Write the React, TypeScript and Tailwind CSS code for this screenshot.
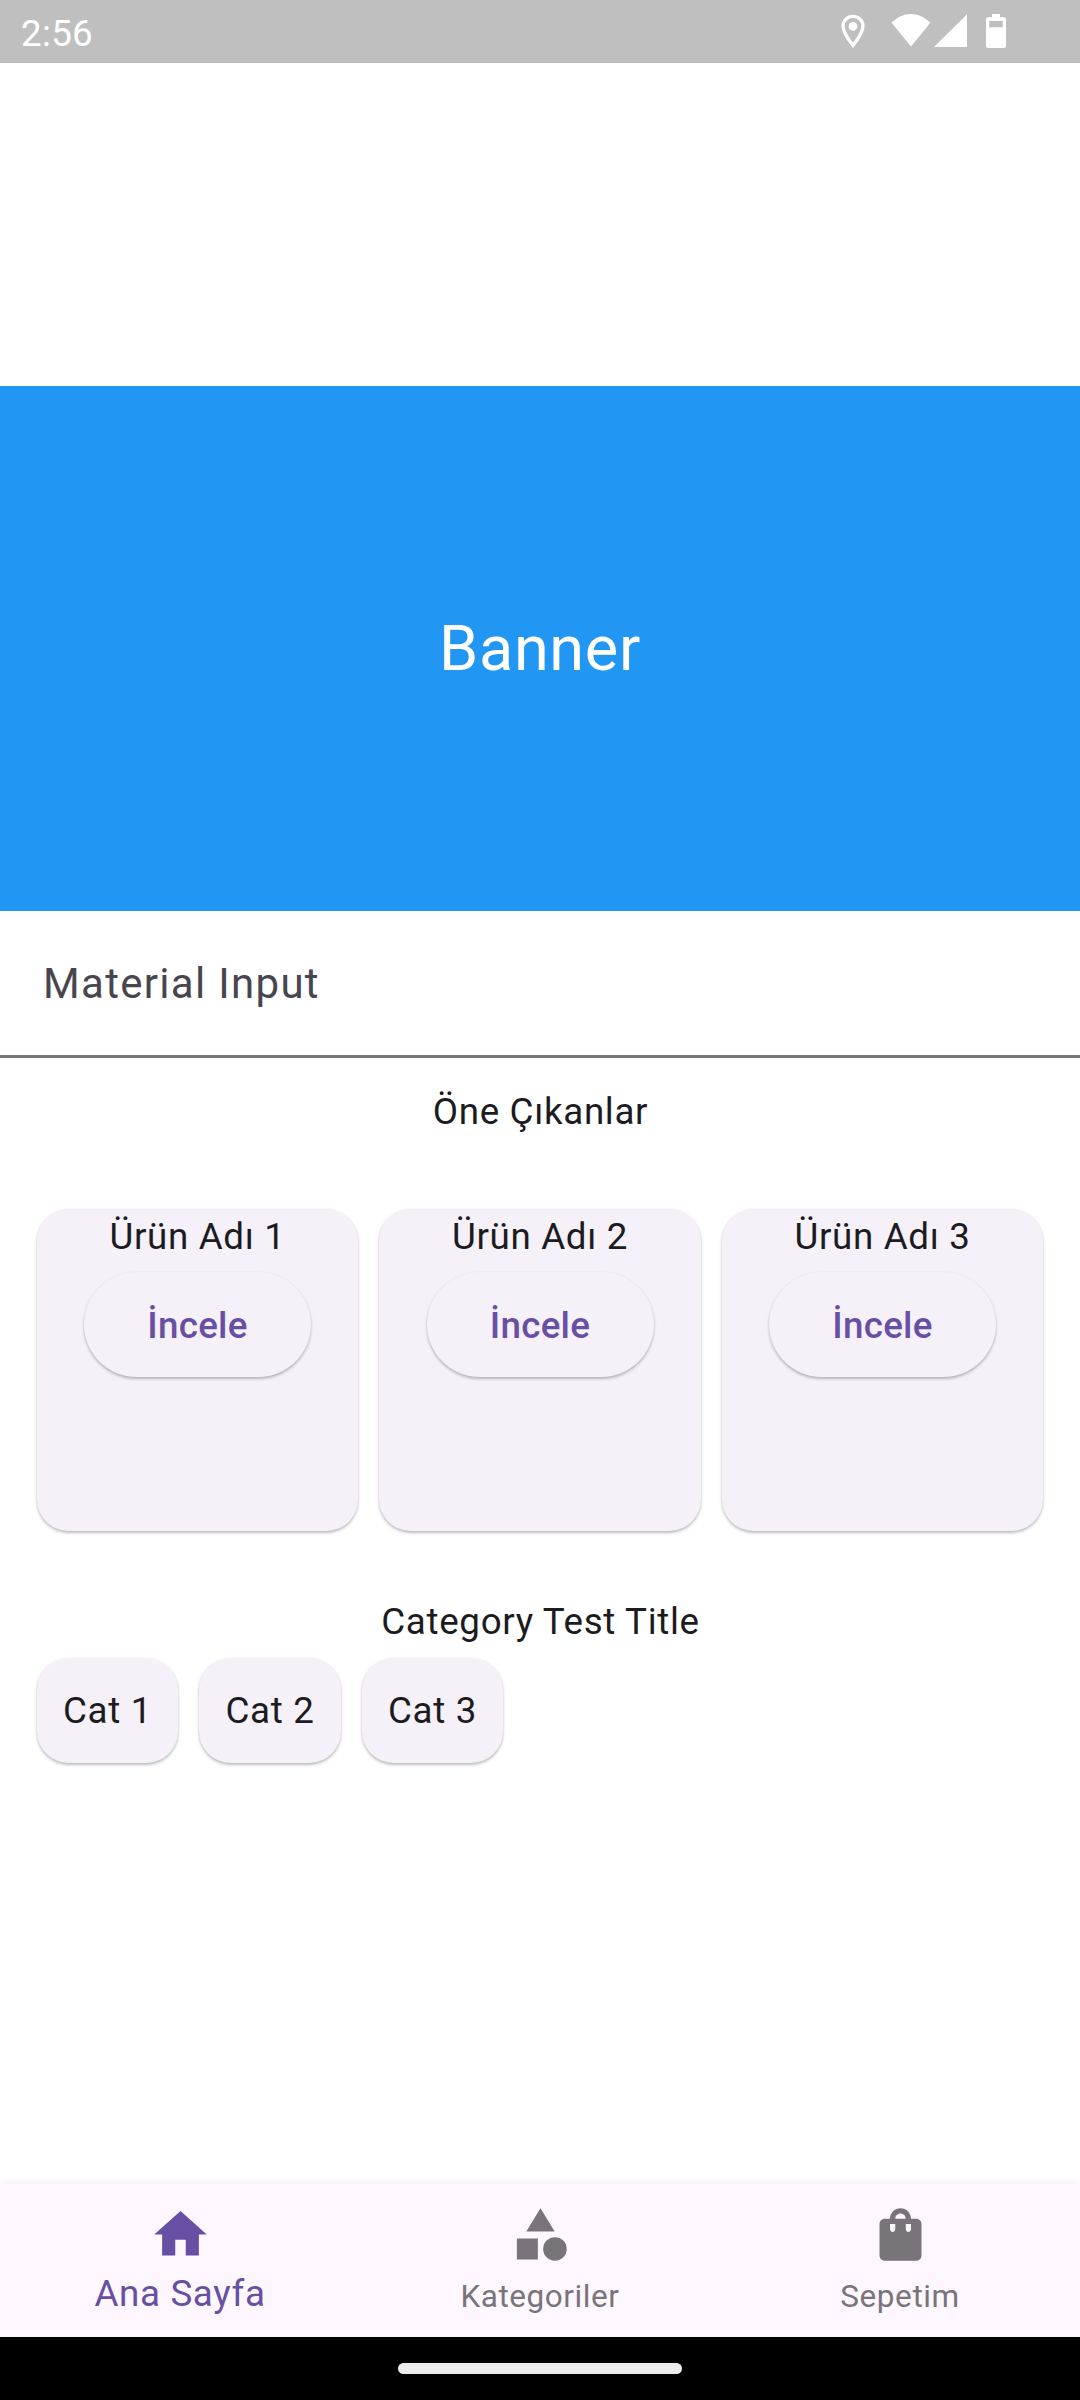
import React from "react";

const products = ["Ürün Adı 1", "Ürün Adı 2", "Ürün Adı 3"];
const categories = ["Cat 1", "Cat 2", "Cat 3"];

function StatusBar() {
  return (
    <header className="flex h-[63px] items-start justify-between bg-[#bfbfbf] pl-[21px] text-white">
      <span className="mt-[12px] text-[36.75px] leading-[44px] tracking-[0.3px]">2:56</span>
      <div className="mr-[74px] mt-[14px] flex h-[34px] items-start">
        <svg className="h-[34px] w-[24px]" viewBox="0 0 24 34" fill="none">
          <path d="M12 2.3C6.5 2.3 2 6.6 2 12C2 19 12 31.500 12 31.500C12 31.500 22 19 22 12C22 6.600 17.500 2.300 12 2.300Z" stroke="white" strokeWidth="3.300" />
          <circle cx="12" cy="12.400" r="4.300" fill="white" />
        </svg>
        <svg className="ml-[26px] h-[34px] w-[40px]" viewBox="0 0 40 34" fill="white">
          <path d="M0.500 8.800C12 -2.900 28 -2.900 39.300 8.800L20 32.600Z" />
        </svg>
        <svg className="ml-[3px] h-[34px] w-[33px]" viewBox="0 0 33 34" fill="white">
          <path d="M33 0.300V33H0Z" />
        </svg>
        <svg className="ml-[19px] h-[34px] w-[20px]" viewBox="0 0 20 34" fill="white" fillRule="evenodd">
          <path d="M6 0H14V3.200H17.800Q20 3.200 20 5.400V31.800Q20 34 17.800 34H2.200Q0 34 0 31.800V5.400Q0 3.200 2.200 3.200H6ZM3.200 7V13.200H16.800V7Z" />
        </svg>
      </div>
    </header>
  );
}

function ProductCard({ name }: { name: string }) {
  return (
    <article className="flex h-[321.5px] flex-1 flex-col items-center rounded-[31.5px] bg-[#f6f1f9] shadow-[0_2px_3px_rgba(0,0,0,0.25),0_0_3px_rgba(0,0,0,0.04)]">
      <h3 className="mt-[1.5px] h-[51px]">{name}</h3>
      <button className="mt-[10.5px] h-[105px] w-[227px] rounded-full bg-[#f6f1f9] pt-[3px] text-[36.75px] font-medium tracking-[0.2625px] text-[#6750a4] shadow-[0_2px_3px_rgba(0,0,0,0.25),0_0_2px_rgba(0,0,0,0.04)]">
        İncele
      </button>
    </article>
  );
}

function NavIcon({ path }: { path: string }) {
  return (
    <svg className="size-[63px]" viewBox="0 0 24 24" fill="currentColor">
      <path d={path} />
    </svg>
  );
}

function BottomNav() {
  return (
    <nav className="relative grid h-[153px] grid-cols-3 bg-[#fef7ff] pt-[19px] text-[#79747a] shadow-[0_-3px_6px_rgba(0,0,0,0.05)]">
      <a className="flex flex-col items-center text-[#6750a4]">
        <NavIcon path="M10 20v-6h4v6h5v-8h3L12 3 2 12h3v8z" />
        <span className="mt-[1.5px] text-[36.75px] leading-[52.5px] tracking-[0.656px]">Ana Sayfa</span>
      </a>
      <a className="flex flex-col items-center">
        <NavIcon path="M12 2 6.600 10.900h10.800zM13 17.500a4.500 4.500 0 1 0 9 0a4.500 4.500 0 1 0-9 0M3 13.500h8v8H3z" />
        <span className="mt-[4.5px] text-[31.5px] leading-[52.5px] tracking-[0.5625px]">Kategoriler</span>
      </a>
      <a className="flex flex-col items-center">
        <NavIcon path="M18 6h-2c0-2.210-1.790-4-4-4S8 3.790 8 6H6c-1.100 0-2 .9-2 2v12c0 1.100.9 2 2 2h12c1.100 0 2-.9 2-2V8c0-1.100-.9-2-2-2zm-8 4c0 .55-.45 1-1 1s-1-.45-1-1V8h2v2zm2-6c1.100 0 2 .9 2 2h-4c0-1.100.9-2 2-2zm4 6c0 .55-.45 1-1 1s-1-.45-1-1V8h2v2z" />
        <span className="mt-[4.5px] text-[31.5px] leading-[52.5px] tracking-[0.5625px]">Sepetim</span>
      </a>
    </nav>
  );
}

export default function App() {
  return (
    <div className="flex h-[2400px] w-[1080px] flex-col overflow-hidden bg-white font-['Roboto',sans-serif] text-[#1c1b1f]">
      <StatusBar />
      <main className="flex-1 pt-[323px] text-[36.75px] leading-[52.5px] tracking-[0.656px]">
        <section className="flex h-[525px] items-center justify-center bg-[#2196f3] text-[63px] leading-[90px] text-white">
          Banner
        </section>
        <div className="flex h-[147px] items-center border-b-[3px] border-[#79747e] pl-[43px] pt-[2px] text-[42px] tracking-[1.3125px] text-[#49454f]">
          Material Input
        </div>
        <h2 className="pl-px pt-[28px] text-center">Öne Çıkanlar</h2>
        <section className="mt-[70.5px] flex gap-[21px] px-[36.75px]">
          {products.map((name) => (
            <ProductCard key={name} name={name} />
          ))}
        </section>
        <h2 className="mt-[65.5px] pl-px text-center">Category Test Title</h2>
        <section className="mt-[9px] flex gap-[21px] px-[36.75px]">
          {categories.map((name) => (
            <div
              key={name}
              className="flex h-[105px] w-[141.5px] items-center justify-center rounded-[31.5px] bg-[#f6f1f9] pt-[2px] shadow-[0_2px_3px_rgba(0,0,0,0.25),0_0_3px_rgba(0,0,0,0.04)]"
            >
              {name}
            </div>
          ))}
        </section>
      </main>
      <BottomNav />
      <footer className="flex h-[63px] justify-center bg-black pt-[26px]">
        <div className="h-[11px] w-[284px] rounded-full bg-[#ececec]" />
      </footer>
    </div>
  );
}
